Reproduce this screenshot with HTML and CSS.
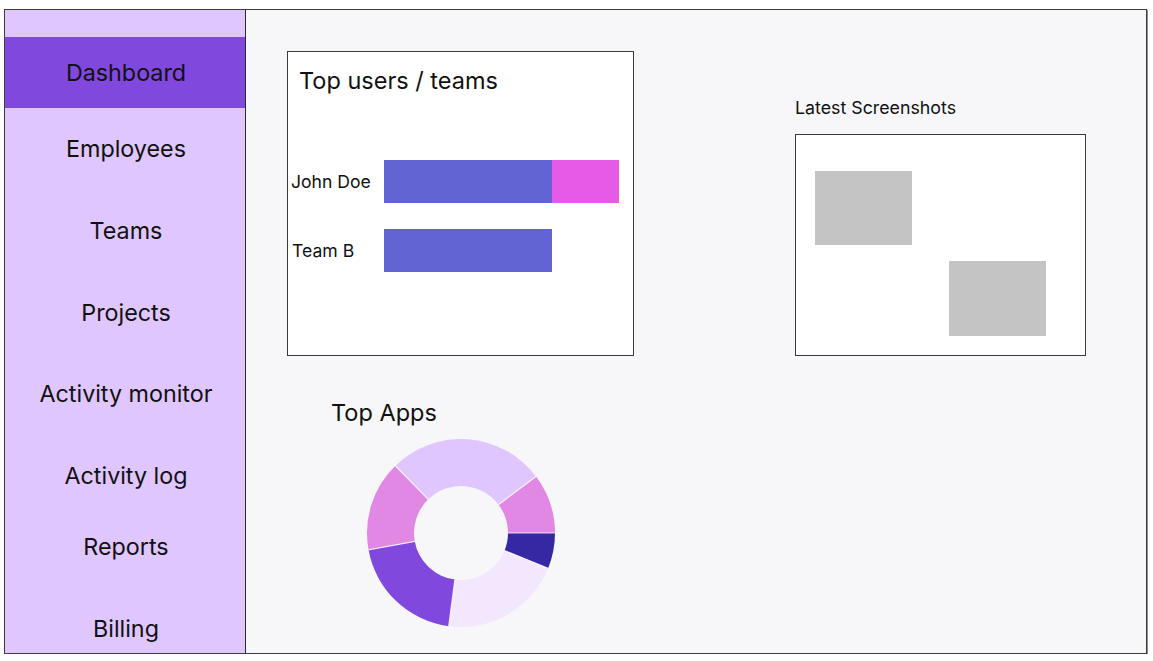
FILE: index.html
```html
<!DOCTYPE html>
<html lang="en">
<head>
<meta charset="utf-8">
<title>Dashboard</title>
<link rel="stylesheet" href="styles.css">
</head>
<body>
<div class="frame">
  <nav class="sidebar">
    <div class="nav-item active">Dashboard</div>
    <div class="nav-item">Employees</div>
    <div class="nav-item">Teams</div>
    <div class="nav-item nav-item--tight">Projects</div>
    <div class="nav-item">Activity monitor</div>
    <div class="nav-item">Activity log</div>
    <div class="nav-item nav-item--short">Reports</div>
    <div class="nav-item nav-item--last">Billing</div>
  </nav>
  <main class="main">
    <div class="col-left">
      <section class="card">
        <h2 class="card-title">Top users / teams</h2>
        <div class="bars">
          <div class="bar-label">John Doe</div>
          <div class="bar-track">
            <div class="bar bar-blue" style="width:168px"></div>
            <div class="bar bar-pink" style="width:67px"></div>
          </div>
          <div class="bar-label bar-label--b">Team B</div>
          <div class="bar-track">
            <div class="bar bar-blue" style="width:168px"></div>
          </div>
        </div>
      </section>
      <section class="apps">
        <h2 class="apps-title">Top Apps</h2>
        <svg class="donut" width="190" height="190" viewBox="0 0 190 190">
          <path fill="#e0c6fe" d="M29.35 27.72 A94 94 0 0 1 170.07 38.43 L132.53 66.72 A47 47 0 0 0 62.18 61.36 Z"/>
          <path fill="#e088e4" d="M170.07 38.43 A94 94 0 0 1 189 95 L142 95 A47 47 0 0 0 132.53 66.72 Z"/>
          <path fill="#3628a3" d="M189 95 A94 94 0 0 1 182.16 130.21 L138.58 112.61 A47 47 0 0 0 142 95 Z"/>
          <path fill="#f3e7fe" d="M182.16 130.21 A94 94 0 0 1 82.73 188.19 L88.87 141.6 A47 47 0 0 0 138.58 112.61 Z"/>
          <path fill="#8048dc" d="M82.73 188.19 A94 94 0 0 1 2.51 111.81 L48.76 103.4 A47 47 0 0 0 88.87 141.6 Z"/>
          <path fill="#e088e4" d="M2.51 111.81 A94 94 0 0 1 29.35 27.72 L62.18 61.36 A47 47 0 0 0 48.76 103.4 Z"/>
          <g stroke="#ffffff" stroke-width="1.2" fill="none" opacity="0.8">
            <line x1="29.35" y1="27.72" x2="62.18" y2="61.36"/>
            <line x1="170.07" y1="38.43" x2="132.53" y2="66.72"/>
            <line x1="189" y1="95" x2="142" y2="95"/>
            <line x1="182.16" y1="130.21" x2="138.58" y2="112.61"/>
            <line x1="82.73" y1="188.19" x2="88.87" y2="141.6"/>
            <line x1="2.51" y1="111.81" x2="48.76" y2="103.4"/>
          </g>
        </svg>
      </section>
    </div>
    <div class="col-right">
      <h3 class="shots-title">Latest Screenshots</h3>
      <div class="shots">
        <div class="shot"></div>
        <div class="shot-gap"></div>
        <div class="shot-gap"></div>
        <div class="shot"></div>
      </div>
    </div>
  </main>
</div>
</body>
</html>
```

FILE: styles.css
```css
* { box-sizing: border-box; }
html, body { margin: 0; padding: 0; background: #ffffff; }
body {
  font-family: Inter, "Noto Sans", "Liberation Sans", sans-serif;
  color: #111111;
}
.frame {
  margin: 9px 0 0 4px;
  width: 1143px;
  height: 645px;
  border: 1px solid #3c3c3c;
  box-shadow: 1px 1px 0 #8a8a8a;
  display: flex;
  overflow: hidden;
}
.sidebar {
  width: 241px;
  flex: none;
  background: #e0c6fe;
  border-right: 1px solid #2a2a2a;
  padding-top: 27px;
  padding-left: 2px;
  display: flex;
  flex-direction: column;
}
.nav-item {
  flex: none;
  height: 82px;
  display: flex;
  align-items: center;
  justify-content: center;
  font-size: 23.3px;
  line-height: 28px;
}
.nav-item.active {
  height: 71px;
  margin-left: -2px;
  padding-left: 2px;
  background: #8048dc;
}
.nav-item--tight { height: 81px; }
.nav-item--short { height: 60px; }
.nav-item--last {
  height: 75px;
  align-items: flex-start;
  padding-top: 38px;
}
.main {
  flex: 1;
  background: #f7f7f9;
  padding: 41px 0 0 41px;
  display: flex;
  align-items: flex-start;
}
.col-left { width: 347px; flex: none; }
.card {
  width: 347px;
  height: 305px;
  background: #ffffff;
  border: 1px solid #3a3a3a;
}
.card-title {
  margin: 0;
  padding: 15px 0 0 11px;
  font-size: 23.5px;
  line-height: 28px;
  font-weight: 400;
}
.bars {
  margin-top: 65px;
  display: grid;
  grid-template-columns: 96px 1fr;
  row-gap: 26px;
  align-items: center;
}
.bar-label {
  padding-left: 3px;
  font-size: 17.6px;
}
.bar-label--b { padding-left: 4px; }
.bar-track { display: flex; height: 43px; }
.bar { height: 43px; }
.bar-blue { background: #6264d4; }
.bar-pink { background: #e65ae8; }
.apps { padding-top: 44px; }
.apps-title {
  margin: 0 0 0 44px;
  font-size: 23.5px;
  line-height: 26px;
  font-weight: 400;
}
.donut {
  display: block;
  margin: 12px 0 0 79px;
}
.col-right {
  margin-left: 161px;
  padding-top: 47px;
}
.shots-title {
  margin: 0;
  font-size: 17.8px;
  line-height: 20px;
  font-weight: 400;
}
.shots {
  margin-top: 16px;
  width: 291px;
  height: 222px;
  background: #ffffff;
  border: 1px solid #3a3a3a;
  padding: 36px 0 0 19px;
  display: grid;
  grid-template-columns: 97px 97px;
  grid-template-rows: 74px 75px;
  column-gap: 37px;
  row-gap: 16px;
}
.shot { background: #c4c4c4; }
```
